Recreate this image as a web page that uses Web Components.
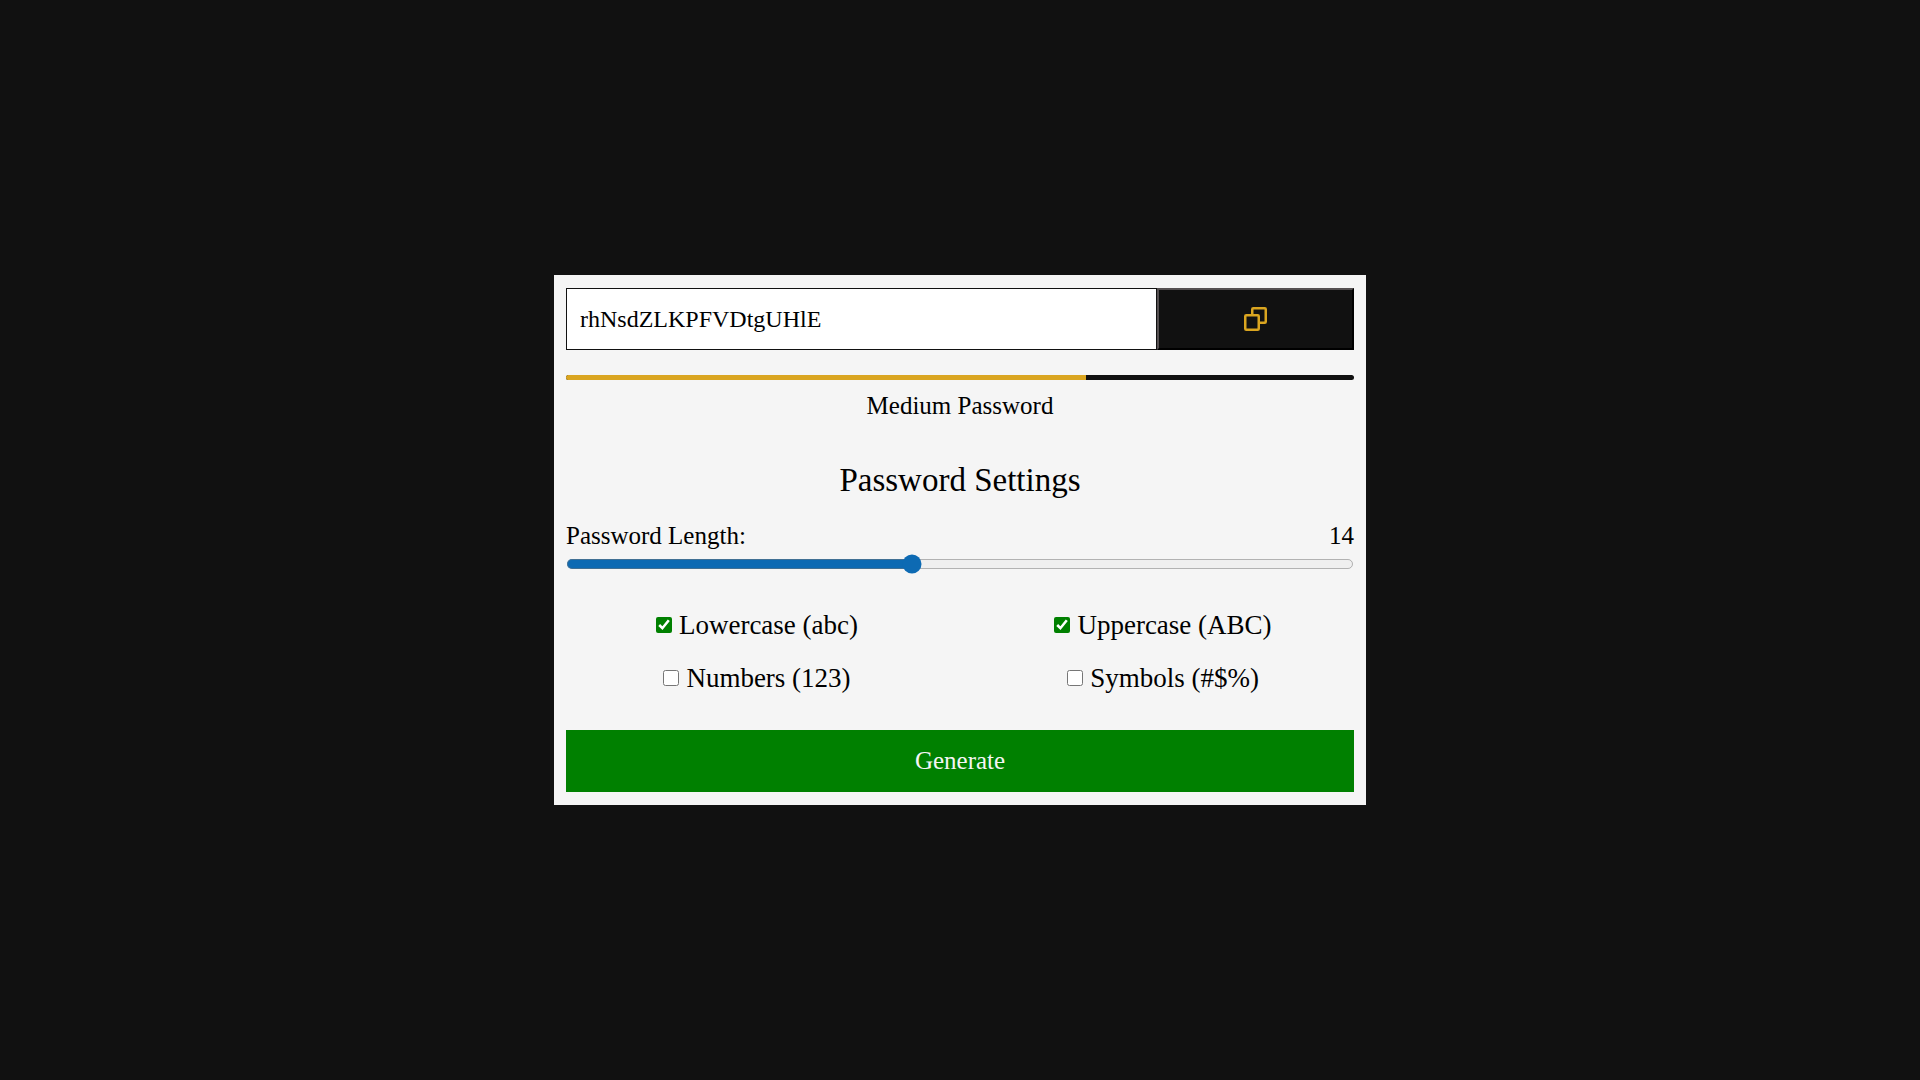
<!DOCTYPE html>
<html lang="en">
<head>
<meta charset="utf-8">
<meta name="viewport" content="width=device-width, initial-scale=1">
<title>Password Generator</title>
<style>
  body {
    margin: 0;
    min-height: 100vh;
    display: flex;
    align-items: center;
    justify-content: center;
    background: #111;
    color: #000;
    font-family: "Liberation Serif", Georgia, serif;
    font-size: 25px;
    line-height: 28px;
  }
</style>
</head>
<body>
<password-generator></password-generator>

<script>
class PasswordOutput extends HTMLElement {
  constructor() {
    super();
    this.root = this.attachShadow({ mode: 'open' });
    this.root.innerHTML = `<style>
        :host {
          display: grid;
          grid-template-columns: 3fr 1fr;
        }
        input {
          box-sizing: border-box;
          width: 100%;
          min-width: 0;
          margin: 0;
          padding: 16px 13px;
          border: 1px solid #111;
          border-radius: 0;
          outline: none;
          background: #fff;
          color: #000;
          font: inherit;
          font-size: 24px;
          line-height: 28px;
        }
        button {
          display: flex;
          align-items: center;
          justify-content: center;
          padding: 0;
          border: 2px solid #000;
          border-top-color: #555051;
          border-left-color: #555051;
          background: #111;
          color: goldenrod;
          cursor: pointer;
        }
      </style>
      <input type="text" aria-label="Generated password" readonly>
      <button type="button" aria-label="Copy password">
        <svg width="23" height="24" viewBox="0 0 23 24" fill="none" stroke="currentColor" stroke-width="2.5">
          <rect x="1.25" y="8.25" width="13.5" height="14.5" rx="1"/>
          <path d="M8.25 8V2.25a1 1 0 0 1 1-1h11.5a1 1 0 0 1 1 1v12.5a1 1 0 0 1-1 1H15"/>
        </svg>
      </button>`;
    this.input = this.root.querySelector('input');
    this.root.querySelector('button').addEventListener('click', () => {
      if (navigator.clipboard) {
        navigator.clipboard.writeText(this.input.value);
      }
    });
  }

  static get observedAttributes() {
    return ['value'];
  }

  attributeChangedCallback(attrName, oldVal, newVal) {
    this.input.value = newVal;
  }
}
customElements.define('password-output', PasswordOutput);

class StrengthMeter extends HTMLElement {
  constructor() {
    super();
    this.root = this.attachShadow({ mode: 'open' });
    this.root.innerHTML = `<style>
        :host {
          display: block;
          text-align: center;
        }
        .track {
          height: 5px;
          margin-bottom: 12px;
          border-radius: 3px;
          overflow: hidden;
          background: #111;
        }
        .fill {
          height: 100%;
          width: 66%;
          background: goldenrod;
        }
      </style>
      <div class="track"><div class="fill"></div></div>
      <slot></slot>`;
    this.fill = this.root.querySelector('.fill');
  }

  static get observedAttributes() {
    return ['level'];
  }

  attributeChangedCallback(attrName, oldVal, newVal) {
    const levels = {
      weak: ['33%', 'red'],
      medium: ['66%', 'goldenrod'],
      strong: ['100%', 'green']
    };
    const [width, color] = levels[newVal];
    this.fill.style.width = width;
    this.fill.style.background = color;
  }
}
customElements.define('strength-meter', StrengthMeter);

class LengthSlider extends HTMLElement {
  constructor() {
    super();
    this.root = this.attachShadow({ mode: 'open' });
    this.root.innerHTML = `<style>
        :host {
          display: block;
        }
        .row {
          display: flex;
          justify-content: space-between;
          margin-bottom: 4px;
        }
        /* zoom keeps the native track and thumb in proportion */
        input {
          display: block;
          box-sizing: border-box;
          zoom: 1.25;
          width: 100%;
          height: 16px;
          margin: 0;
          accent-color: #0d6ab3;
        }
      </style>
      <div class="row">
        <label for="length"><slot></slot></label>
        <output for="length">14</output>
      </div>
      <input id="length" type="range" min="0" max="32" value="14" aria-label="Password Length">`;
    this.input = this.root.querySelector('input');
    this.input.addEventListener('input', () => {
      this.root.querySelector('output').textContent = this.input.value;
    });
  }

  get value() {
    return Number(this.input.value);
  }
}
customElements.define('length-slider', LengthSlider);

class CharOption extends HTMLElement {
  constructor() {
    super();
    this.root = this.attachShadow({ mode: 'open' });
    this.root.innerHTML = `<style>
        :host {
          display: flex;
          justify-content: center;
          font-size: 27px;
        }
        label {
          display: flex;
          align-items: center;
          gap: 7px;
        }
        input {
          width: 16px;
          height: 16px;
          margin: 0;
          accent-color: green;
        }
      </style>
      <label><input type="checkbox"><slot></slot></label>`;
    this.input = this.root.querySelector('input');
    this.input.checked = this.hasAttribute('checked');
  }

  get checked() {
    return this.input.checked;
  }
}
customElements.define('char-option', CharOption);

class PasswordGenerator extends HTMLElement {
  constructor() {
    super();
    this.root = this.attachShadow({ mode: 'open' });
    this.root.innerHTML = `<style>
        :host {
          display: block;
          box-sizing: border-box;
          width: 100%;
          max-width: 812px;
          padding: 13px 12px;
          background: #f5f5f5;
        }
        strength-meter {
          margin-top: 25px;
        }
        h2 {
          margin: 42px 0 24px;
          font-size: 33px;
          font-weight: normal;
          line-height: 36px;
          text-align: center;
        }
        .options {
          display: grid;
          grid-template-columns: 1fr 1fr;
          row-gap: 25px;
          margin: 37px -12px 38px;
        }
        .generate {
          display: block;
          width: 100%;
          padding: 17px;
          border: none;
          background: green;
          color: #f5f5f5;
          font: inherit;
          cursor: pointer;
        }
      </style>
      <password-output value="rhNsdZLKPFVDtgUHlE"></password-output>
      <strength-meter level="medium">Medium Password</strength-meter>
      <h2>Password Settings</h2>
      <length-slider>Password Length:</length-slider>
      <div class="options">
        <char-option data-chars="abcdefghijklmnopqrstuvwxyz" checked>Lowercase (abc)</char-option>
        <char-option data-chars="ABCDEFGHIJKLMNOPQRSTUVWXYZ" checked>Uppercase (ABC)</char-option>
        <char-option data-chars="0123456789">Numbers (123)</char-option>
        <char-option data-chars="!@#$%^&amp;*()_+">Symbols (#$%)</char-option>
      </div>
      <button class="generate" type="button">Generate</button>`;
    this.root.querySelector('.generate').addEventListener('click', () => this.generate());
  }

  generate() {
    const length = this.root.querySelector('length-slider').value;
    let chars = '';
    this.root.querySelectorAll('char-option').forEach(x => {
      if (x.checked) {
        chars += x.dataset.chars;
      }
    });
    if (!chars) {
      return;
    }
    let password = '';
    for (let index = 0; index < length; index++) {
      password += chars[Math.floor(Math.random() * chars.length)];
    }
    this.root.querySelector('password-output').setAttribute('value', password);

    const level = length < 8 ? 'weak' : length < 20 ? 'medium' : 'strong';
    const meter = this.root.querySelector('strength-meter');
    meter.setAttribute('level', level);
    meter.textContent = level[0].toUpperCase() + level.slice(1) + ' Password';
  }
}
customElements.define('password-generator', PasswordGenerator);
</script>
</body>
</html>
